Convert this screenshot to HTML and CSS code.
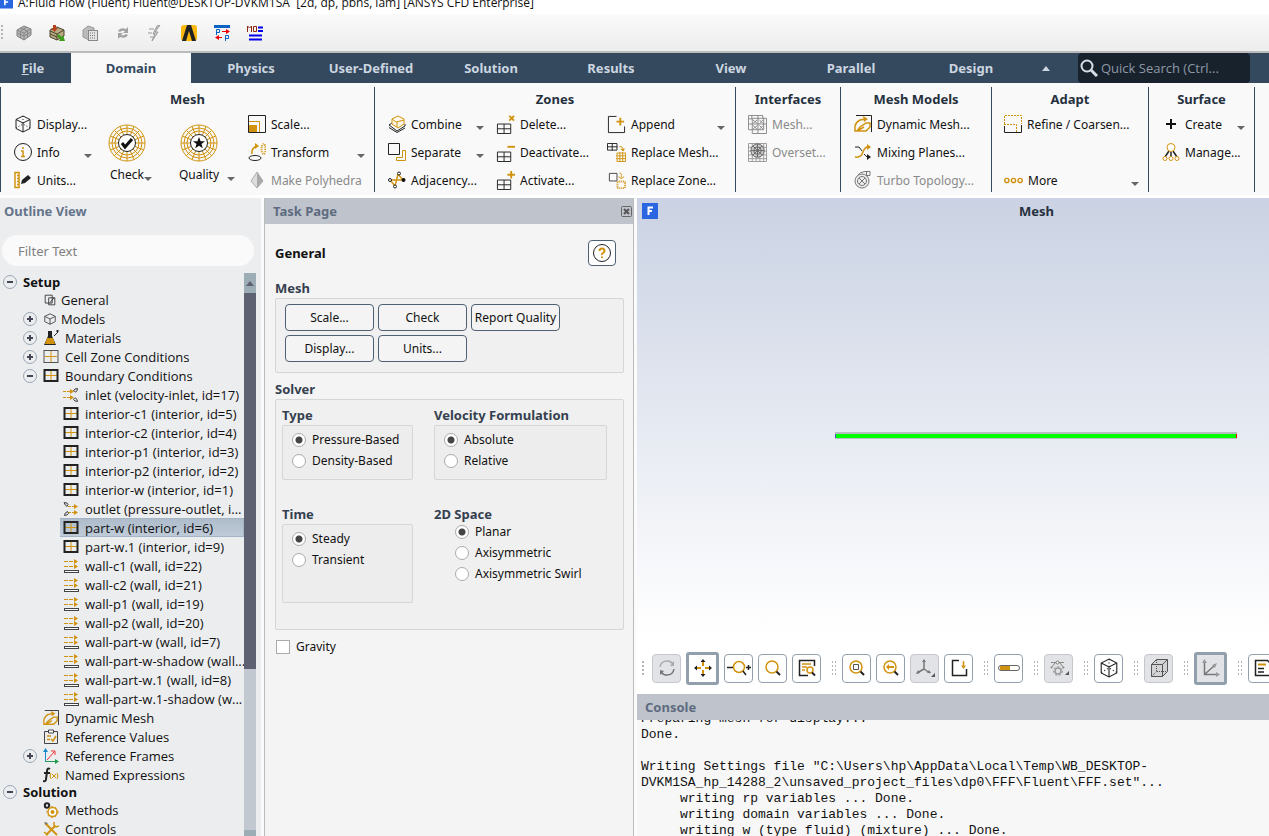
FILE: index.html
```html
<!DOCTYPE html>
<html lang="en">
<head>
    <meta charset="UTF-8">
    <meta name="viewport" content="width=device-width, initial-scale=1.0">
    <title>A:Fluid Flow (Fluent)</title>
    <link rel="stylesheet" href="styles.css">
</head>
<body>
    <!-- shared icons -->
    <svg class="sprite" aria-hidden="true">
        <symbol id="cube" viewBox="0 0 18 18">
            <path d="M9 1l7 3.500v9L9 17l-7-3.500v-9zM2 4.500l7 3.500 7-3.500M9 8v9" fill="none" stroke="#222"/>
            <path d="M9 1v8M2 13l7-4 7 4" fill="none" stroke="#222" stroke-dasharray="1 2"/>
        </symbol>
        <symbol id="grid-dark" viewBox="0 0 16 16">
            <path d="M8 2v12M2 7.500h12" stroke="#d1930f"/>
            <rect x="1.500" y="2" width="13" height="11" fill="none" stroke="#222" stroke-width="2"/>
        </symbol>
        <symbol id="grid-light" viewBox="0 0 16 16">
            <path d="M8 2v12M2 7.500h12" stroke="#d1930f"/>
            <rect x="1" y="1.500" width="14" height="12" fill="none" stroke="#555"/>
        </symbol>
        <symbol id="wall" viewBox="0 0 16 16">
            <path d="M1 3.500h12M1 8.500h12" stroke="#d1930f" stroke-dasharray="4 1"/>
            <path d="M11 1l4 2.500-4 2.500zM11 6l4 2.500-4 2.500z" fill="#d1930f"/>
            <rect x="1.500" y="12.500" width="14" height="2" fill="#fff" stroke="#444"/>
        </symbol>
        <symbol id="inlet" viewBox="0 0 16 16">
            <path d="M0 4.500h8M0 10.500h8" stroke="#d1930f" stroke-dasharray="3 1"/>
            <path d="M7 2l4 2.500L7 7zM7 8l4 2.500L7 13z" fill="#d1930f"/>
            <path d="M10.500 3.500q1-2 4-2 0 3-2 3.500zM10.500 12.500q1-2 2-1.500 2 1 2 3.500-3 0-4-2z" fill="#ddd" stroke="#444"/>
        </symbol>
        <symbol id="outlet" viewBox="0 0 16 16">
            <path d="M5 5.500h8M5 11.500h8" stroke="#d1930f" stroke-dasharray="3 1"/>
            <path d="M11 3l4 2.500-4 2.500zM11 9l4 2.500-4 2.500z" fill="#d1930f"/>
            <path d="M1 1.500q4 0 4 2l-1 2q-2-1-3-4zM1.500 14.500q0-3 3-4l1 2q-1 2-4 2z" fill="#ddd" stroke="#444"/>
        </symbol>
        <symbol id="dynamic" viewBox="0 0 18 18">
            <path d="M2 .500h15.500V17" fill="none" stroke="#222"/>
            <path d="M1 11q1-4 5-6l6-1M1 11l0 5h3M3 16l3-4 6-4 4 0v4l-4 4H3l7-4" fill="none" stroke="#d1930f" stroke-width="1.500"/>
            <path d="M9 1l5 3-4 3z" fill="#d1930f"/>
        </symbol>
        <symbol id="minigrid" viewBox="0 0 20 20">
            <path d="M1.500 9.500h14v10h-14zM8.500 9.500v10M1.500 14.500h14" fill="none" stroke="#222"/>
        </symbol>
        <symbol id="radial" viewBox="0 0 38 38">
            <g fill="none" stroke="#d1930f">
                <circle cx="19" cy="19" r="18"/><circle cx="19" cy="19" r="15"/><circle cx="19" cy="19" r="12"/>
                <path d="M19 1v36M1 19h36M6.300 6.300l25.400 25.400M31.700 6.300L6.300 31.700M12 2.400l14 33.200M26 2.400L12 35.600M2.400 12l33.200 14M2.400 26l33.200-14"/>
            </g>
            <circle cx="19" cy="19" r="8.500" fill="#fff" stroke="#222"/>
        </symbol>
        <symbol id="magnifier" viewBox="0 0 20 20">
            <circle cx="9" cy="9" r="6" fill="#fffdf5" stroke="#d1930f" stroke-width="1.500"/>
            <path d="M13.500 13.500l3.500 3.500" stroke="#222" stroke-width="2"/>
        </symbol>
    </svg>

    <header class="titlebar">
        <svg class="logo" viewBox="0 0 16 16"><rect width="16" height="16" fill="#2a66e0"/><path d="M6 12V4h5M6 8h4" fill="none" stroke="#fff" stroke-width="2"/></svg>
        <span class="title-text">A:Fluid Flow (Fluent) Fluent@DESKTOP-DVKM1SA&nbsp; [2d, dp, pbns, lam] [ANSYS CFD Enterprise]</span>
    </header>

    <div class="toolbar">
        <span class="grip"></span>
        <button class="tool" aria-label="Mesh"><svg viewBox="0 0 16 16"><path d="M1 5l7-4 7 3v6l-7 5-7-4z" fill="#b4b4b4" stroke="#808080"/><path d="M1 5l7 3 7-4M8 8v7M1 8l7 3 7-4M4.500 3l7 3v7M11 2L4.500 6v7" fill="none" stroke="#888"/></svg></button>
        <button class="tool" aria-label="Update mesh"><svg viewBox="0 0 16 16"><path d="M1 5l7-3 7 3v6l-7 4-7-3z" fill="#b5aa83" stroke="#4d452b"/><path d="M1 6l7 3 7-4M8 9v6M1 9l7 3" fill="none" stroke="#4d452b"/><path d="M4 0h3v3h2L5.500 7 2 3h2z" fill="#b5431c"/><path d="M9 9l4 3 1-2 2 6h-6l1-2-3-3z" fill="#3f9c1c"/></svg></button>
        <button class="tool" aria-label="Calculate"><svg viewBox="0 0 16 16"><path d="M1 5l5-4 6 2v11L7 15l-6-3z" fill="#bbb" stroke="#999"/><rect x="6.500" y="5.500" width="9" height="10" fill="#e4e4e4" stroke="#888"/><path d="M8 8h6M8 10.500h6M8 13h6" stroke="#777" stroke-dasharray="1 1"/></svg></button>
        <button class="tool" aria-label="Refresh"><svg viewBox="0 0 16 16"><path d="M3 6q2-4 8-2l2-2v6H8l2-2q-3-1-5 1zM13 10q-2 4-8 2l-2 2V8h5l-2 2q3 1 5-1z" fill="#a3a3a3"/></svg></button>
        <button class="tool" aria-label="Run"><svg viewBox="0 0 16 16"><path d="M12 0L7 7h3l-6 9 3-7H5l4-8z" fill="#ccc" stroke="#999"/><path d="M1 4h5M0 8h4M2 12h3" stroke="#999"/></svg></button>
        <button class="tool" aria-label="Ansys"><svg viewBox="0 0 16 16"><rect width="16" height="16" rx="3" fill="#fbb80f"/><path d="M6 0h4l5 16h-4L8 6l-3 10H1z" fill="#222"/></svg></button>
        <button class="tool" aria-label="Parameters"><svg viewBox="0 0 16 16"><path d="M0 1.500h16" stroke="#0a62c4" stroke-width="3"/><path d="M2.500 10V4.500h3v3h-3M11.500 16v-5.500h3v3h-3" fill="none" stroke="#0a62c4"/><path d="M8 6.500h5M3 12.500h5" stroke="#e00"/><path d="M12 4l4 2.500-4 2.500zM5 10l-4 2.500L5 15z" fill="#e00"/></svg></button>
        <button class="tool" aria-label="Monitor"><svg viewBox="0 0 16 16"><path d="M.500 7V1l2 2 2-2v6M6.500 1.500h3v5h-3z" fill="none" stroke="#8d2a12"/><path d="M11 2.500h5M11 6h5M2 10.500h13M2 14.500h13" stroke="#00e" stroke-width="2"/></svg></button>
    </div>

    <nav class="tabs">
        <button class="tab tab-file"><u>F</u>ile</button>
        <button class="tab active">Domain</button>
        <button class="tab">Physics</button>
        <button class="tab">User-Defined</button>
        <button class="tab">Solution</button>
        <button class="tab">Results</button>
        <button class="tab">View</button>
        <button class="tab">Parallel</button>
        <button class="tab">Design</button>
        <button class="collapse" aria-label="Collapse ribbon"><span class="caret-up"></span></button>
        <label class="search">
            <svg viewBox="0 0 18 18"><circle cx="7" cy="7" r="5.500" fill="none" stroke="#d7dde5" stroke-width="2"/><path d="M11 11l6 6" stroke="#d7dde5" stroke-width="3"/></svg>
            <input type="text" placeholder="Quick Search (Ctrl..." aria-label="Quick Search">
        </label>
    </nav>

    <section class="ribbon">
        <div class="group">
            <h2>Mesh</h2>
            <div class="group-body mesh-body">
                <div class="col">
                    <button class="cmd"><svg><use href="#cube"/></svg>Display...</button>
                    <button class="cmd"><svg viewBox="0 0 18 18"><circle cx="9" cy="9" r="8.500" fill="none" stroke="#222"/><path d="M9 4v2M7 8h2v5M7 13.500h4" fill="none" stroke="#d1930f" stroke-width="1.500"/></svg>Info<span class="caret"></span></button>
                    <button class="cmd"><svg viewBox="0 0 18 18"><path d="M1 1.500h4v15H1zM3 4.500h2M3 7.500h2M3 10.500h2M3 13.500h2" fill="none" stroke="#d1930f" stroke-width="1.500"/><path d="M7 13l1-4 6-5 3 3-6 5z" fill="#222"/></svg>Units...</button>
                </div>
                <button class="big"><svg viewBox="0 0 38 38"><use href="#radial"/><path d="M14 19l3 4 7-8" fill="none" stroke="#111" stroke-width="3"/></svg><span class="big-label">Check<span class="caret"></span></span></button>
                <button class="big"><svg viewBox="0 0 38 38"><use href="#radial"/><path d="M19 13l1.600 4.200H25l-3.500 2.700 1.300 4.300-3.800-2.500-3.800 2.500 1.300-4.300-3.500-2.700h4.400z" fill="#111"/></svg><span class="big-label spaced">Quality<span class="caret"></span></span></button>
                <div class="col">
                    <button class="cmd"><svg viewBox="0 0 18 18"><path d="M.500.500h17v17H.500z" fill="none" stroke="#222"/><path d="M1 6.500h10.500V17" fill="none" stroke="#d1930f"/><path d="M1 10h8v7H1z" fill="#d1930f"/></svg>Scale...</button>
                    <button class="cmd"><svg viewBox="0 0 18 18"><ellipse cx="7" cy="15" rx="6" ry="2.500" fill="none" stroke="#222"/><path d="M4 11q-1-6 5-8" fill="none" stroke="#d1930f" stroke-width="1.500"/><path d="M7 0l4 3-4 3z" fill="#d1930f"/><ellipse cx="15.500" cy="6" rx="2" ry="5" fill="none" stroke="#d1930f" stroke-width="2" stroke-dasharray="1 1"/></svg>Transform<span class="caret"></span></button>
                    <button class="cmd" disabled><svg viewBox="0 0 18 18"><path d="M9 1l6 9-6 7-6-7z" fill="#ddd" stroke="#aaa"/><path d="M9 1v16l6-7z" fill="#aaa"/></svg>Make Polyhedra</button>
                </div>
            </div>
        </div>
        <div class="group">
            <h2>Zones</h2>
            <div class="group-body zones-body">
                <div class="col">
                    <button class="cmd"><svg viewBox="0 0 18 18"><path d="M1 10l8 6 8-5M1 12.500l8 5 8-4.500M1 10l3-2M17 11V9" fill="none" stroke="#222"/><path d="M4 4l6-3 6 3v5l-6 4-6-4zM4 4l4 3 8-2M9 7v5" fill="#fff8e8" stroke="#d1930f"/></svg>Combine<span class="caret"></span></button>
                    <button class="cmd"><svg viewBox="0 0 18 18"><path d="M.500.500h11v11H.500z" fill="none" stroke="#222"/><path d="M14.500 7.500h3v10h-9v-3h6z" fill="none" stroke="#d1930f"/></svg>Separate<span class="caret"></span></button>
                    <button class="cmd"><svg viewBox="0 0 18 18"><path d="M2 9h13L10 3 7 15z" fill="none" stroke="#d1930f" stroke-width="1.500"/><g fill="#fff" stroke="#222"><circle cx="2" cy="9" r="1.500"/><circle cx="11" cy="2.500" r="1.500"/><circle cx="7" cy="15.500" r="1.500"/></g><circle cx="15.500" cy="9" r="2" fill="#111"/></svg>Adjacency...</button>
                </div>
                <div class="col">
                    <button class="cmd"><svg class="wide" viewBox="0 0 20 20"><use href="#minigrid"/><path d="M14 1l5 5M19 1l-5 5" stroke="#d1930f" stroke-width="2"/></svg>Delete...</button>
                    <button class="cmd"><svg class="wide" viewBox="0 0 20 20"><use href="#minigrid"/><path d="M12 4h8" stroke="#d1930f" stroke-width="2"/></svg>Deactivate...</button>
                    <button class="cmd"><svg class="wide" viewBox="0 0 20 20"><use href="#minigrid"/><path d="M12 4h8M16 0v8" stroke="#d1930f" stroke-width="2"/></svg>Activate...</button>
                </div>
                <div class="col">
                    <button class="cmd"><svg class="wide" viewBox="0 0 20 20"><path d="M10 1.500H1.500v17h17V12" fill="none" stroke="#222"/><path d="M10 7h8M14 3v8" stroke="#d1930f" stroke-width="2"/></svg>Append<span class="caret"></span></button>
                    <button class="cmd"><svg class="wide" viewBox="0 0 20 20"><path d="M.500.500h10v7H.500zM5.500 0v8M0 4h11" fill="none" stroke="#222"/><path d="M13 4q4-1 4 4M10.500 10.500h9v9h-9zM13.500 10v10M16.500 10v10M10 13.500h10M10 16.500h10" fill="none" stroke="#d1930f"/><path d="M14 6h5l-2 3z" fill="#d1930f"/></svg>Replace Mesh...</button>
                    <button class="cmd"><svg class="wide" viewBox="0 0 20 20"><path d="M2.500 2.500h8v8h-8z" fill="none" stroke="#444"/><path d="M13 2q3 0 2 5M12 6l3 2 3-2" fill="none" stroke="#d1930f"/><path d="M11 11h8v7h-8z" fill="none" stroke="#d1930f" stroke-width="2" stroke-dasharray="1 1"/></svg>Replace Zone...</button>
                </div>
            </div>
        </div>
        <div class="group">
            <h2>Interfaces</h2>
            <div class="group-body interfaces-body">
                <div class="col">
                    <button class="cmd" disabled><svg class="wide" viewBox="0 0 20 20"><path d="M.500.500h15v3h4v16h-15v-4h-4zM4.500 3.500h12v12h-12zM10.500 0v20M0 9.500h20M4 .500v4M0 4h4M5 5l5 4M10 5l-5 4M12 5l4 4M16 5l-4 4M5 11l5 4M10 11l-5 4M12 11l4 4M16 11l-4 4" fill="none" stroke="#888"/></svg>Mesh...</button>
                    <button class="cmd" disabled><svg class="wide" viewBox="0 0 20 20"><path d="M.500.500h19v19H.500zM4.500 0v20M8.500 0v20M12.500 0v20M16.500 0v20M0 4.500h20M0 8.500h20M0 12.500h20M0 16.500h20" fill="none" stroke="#999"/><circle cx="10" cy="8" r="7" fill="#ccc" stroke="#666"/><circle cx="10" cy="8" r="4" fill="none" stroke="#666"/><path d="M3 8h14M10 1v14M5 3l10 10M15 3L5 13" stroke="#666"/></svg>Overset...</button>
                </div>
            </div>
        </div>
        <div class="group">
            <h2>Mesh Models</h2>
            <div class="group-body models-body">
                <div class="col">
                    <button class="cmd"><svg><use href="#dynamic"/></svg>Dynamic Mesh...</button>
                    <button class="cmd"><svg viewBox="0 0 18 18"><path d="M1 4h4l3 4M10 11l3 3h3" fill="none" stroke="#222"/><path d="M1 14q6 1 8-5t7-5" fill="none" stroke="#d1930f" stroke-width="1.500"/><path d="M13 1l4 3-4 3z" fill="#d1930f"/><path d="M13 11l4 3-4 3z" fill="#222"/></svg>Mixing Planes...</button>
                    <button class="cmd" disabled><svg viewBox="0 0 18 18"><circle cx="8" cy="10" r="7" fill="#eee" stroke="#777"/><circle cx="8" cy="10" r="4.500" fill="none" stroke="#777"/><path d="M5 7l6 6M11 7l-6 6M4 4q2-3 7-3.500h5v4h-4M12.500 1v3" fill="none" stroke="#777"/></svg>Turbo Topology...</button>
                </div>
            </div>
        </div>
        <div class="group">
            <h2>Adapt</h2>
            <div class="group-body adapt-body">
                <div class="col">
                    <button class="cmd"><svg viewBox="0 0 18 18"><path d="M.500 9V.500h17V9M0 9.500h12.500V17" fill="none" stroke="#d1930f" stroke-dasharray="2 1"/><path d="M.500 11v6.500h17V10" fill="none" stroke="#222"/></svg>Refine / Coarsen...</button>
                    <span class="cmd"></span>
                    <button class="cmd"><svg class="wide" viewBox="0 0 20 20"><g fill="none" stroke="#d1930f" stroke-width="1.500"><circle cx="3" cy="10" r="2.200"/><circle cx="10" cy="10" r="2.200"/><circle cx="17" cy="10" r="2.200"/></g></svg>More<span class="caret"></span></button>
                </div>
            </div>
        </div>
        <div class="group">
            <h2>Surface</h2>
            <div class="group-body surface-body">
                <div class="col">
                    <button class="cmd"><svg viewBox="0 0 18 18"><path d="M4 9h10M9 4v10" stroke="#111" stroke-width="2"/></svg>Create<span class="caret"></span></button>
                    <button class="cmd"><svg viewBox="0 0 18 18"><path d="M7 8l-4 6M11 8l4 6M9 9v5" stroke="#222" stroke-width="1.500"/><g fill="#fff" stroke="#d1930f"><circle cx="9" cy="4.500" r="4"/><circle cx="3" cy="15.500" r="2"/><circle cx="9" cy="15.500" r="2"/><circle cx="15" cy="15.500" r="2"/></g></svg>Manage...</button>
                </div>
            </div>
        </div>
    </section>

    <main class="workspace">
        <aside class="outline">
            <h2 class="outline-title">Outline View</h2>
            <input class="filter" type="text" placeholder="Filter Text" aria-label="Filter Text">
            <div class="tree-wrap">
                <ul class="tree">
                    <li class="section"><button class="expander minus" aria-label="Collapse"></button>Setup</li>
                    <li class="level1"><svg class="small" viewBox="0 0 16 16"><path d="M2.500 2.500h8v9h-8zM6.500 5.500h7v8h-7zM8 11l5-6" fill="none" stroke="#333"/></svg>General</li>
                    <li class="level1"><button class="expander" aria-label="Expand"></button><svg class="small" viewBox="0 0 16 16"><path d="M8 2l6 3v6l-6 3-6-3V5zM2 5l6 3 6-3M8 8v6" fill="none" stroke="#444"/></svg>Models</li>
                    <li class="level1"><button class="expander" aria-label="Expand"></button><svg viewBox="0 0 16 16"><path d="M5 1h4v5l4 9H1l4-9z" fill="#222"/><path d="M4 8h6l2 6H2z" fill="#d1930f"/><path d="M11 6l4-4M13 1h3M14.500 0v3" stroke="#222"/></svg>Materials</li>
                    <li class="level1"><button class="expander" aria-label="Expand"></button><svg><use href="#grid-light"/></svg>Cell Zone Conditions</li>
                    <li class="level1"><button class="expander minus" aria-label="Collapse"></button><svg><use href="#grid-dark"/></svg>Boundary Conditions</li>
                    <li class="level2"><svg><use href="#inlet"/></svg><span>inlet (velocity-inlet, id=17)</span></li>
                    <li class="level2"><svg><use href="#grid-dark"/></svg><span>interior-c1 (interior, id=5)</span></li>
                    <li class="level2"><svg><use href="#grid-dark"/></svg><span>interior-c2 (interior, id=4)</span></li>
                    <li class="level2"><svg><use href="#grid-dark"/></svg><span>interior-p1 (interior, id=3)</span></li>
                    <li class="level2"><svg><use href="#grid-dark"/></svg><span>interior-p2 (interior, id=2)</span></li>
                    <li class="level2"><svg><use href="#grid-dark"/></svg><span>interior-w (interior, id=1)</span></li>
                    <li class="level2"><svg><use href="#outlet"/></svg><span>outlet (pressure-outlet, i...</span></li>
                    <li class="level2 selected"><svg><use href="#grid-dark"/></svg><span>part-w (interior, id=6)</span></li>
                    <li class="level2"><svg><use href="#grid-dark"/></svg><span>part-w.1 (interior, id=9)</span></li>
                    <li class="level2"><svg><use href="#wall"/></svg><span>wall-c1 (wall, id=22)</span></li>
                    <li class="level2"><svg><use href="#wall"/></svg><span>wall-c2 (wall, id=21)</span></li>
                    <li class="level2"><svg><use href="#wall"/></svg><span>wall-p1 (wall, id=19)</span></li>
                    <li class="level2"><svg><use href="#wall"/></svg><span>wall-p2 (wall, id=20)</span></li>
                    <li class="level2"><svg><use href="#wall"/></svg><span>wall-part-w (wall, id=7)</span></li>
                    <li class="level2"><svg><use href="#wall"/></svg><span>wall-part-w-shadow (wall...</span></li>
                    <li class="level2"><svg><use href="#wall"/></svg><span>wall-part-w.1 (wall, id=8)</span></li>
                    <li class="level2"><svg><use href="#wall"/></svg><span>wall-part-w.1-shadow (w...</span></li>
                    <li class="level1"><svg><use href="#dynamic"/></svg>Dynamic Mesh</li>
                    <li class="level1"><svg viewBox="0 0 16 16"><path d="M1.500 2.500h13v12h-13z" fill="none" stroke="#444"/><path d="M5.500 1h5v3h-5z" fill="#fff" stroke="#444"/><path d="M4 7h4M4 10.500h3M8 10l2 2 3-5" fill="none" stroke="#d1930f" stroke-width="1.500"/></svg>Reference Values</li>
                    <li class="level1"><button class="expander" aria-label="Expand"></button><svg viewBox="0 0 16 16"><path d="M2.500 14V3" stroke="#1a8ad0"/><path d="M0 4l2.500-4L5 4z" fill="#1a8ad0"/><path d="M2 13.500h11" stroke="#1f9a50"/><path d="M12 11l4 2.500-4 2.500z" fill="#1f9a50"/><path d="M4 12l7-8M8 3h4v4" fill="none" stroke="#e33"/></svg>Reference Frames</li>
                    <li class="level1"><svg viewBox="0 0 16 16"><path d="M7 2Q4 0 4 5l-1 7q0 3-3 2M1 6h6" fill="none" stroke="#222" stroke-width="2"/><path d="M8 6q-2 3 0 6M14 6q2 3 0 6M9 7l4 4M13 7l-4 4" fill="none" stroke="#d1930f"/></svg>Named Expressions</li>
                    <li class="section"><button class="expander minus" aria-label="Collapse"></button>Solution</li>
                    <li class="level1"><svg viewBox="0 0 16 16"><circle cx="4" cy="3.500" r="2.200" fill="none" stroke="#222" stroke-width="2"/><circle cx="9.500" cy="10" r="4.500" fill="#fff" stroke="#d1930f" stroke-width="1.500"/><circle cx="9.500" cy="10" r="5.500" fill="none" stroke="#d1930f" stroke-dasharray="2 2"/><circle cx="9.500" cy="10" r="2" fill="#d1930f"/></svg>Methods</li>
                    <li class="level1"><svg viewBox="0 0 16 16"><path d="M2 2l12 12M3 14l9-9" stroke="#d1930f" stroke-width="2"/><path d="M11 1v3l2 2 3-1M1 11l4 3" fill="none" stroke="#d1930f" stroke-width="1.500"/><path d="M1 1l4 1-2 2z" fill="#777"/></svg>Controls</li>
                </ul>
                <div class="scrollbar">
                    <span class="scroll-end"><span class="caret-up dark"></span></span>
                    <span class="scroll-thumb"></span>
                    <span class="scroll-track"></span>
                    <span class="scroll-end"></span>
                </div>
            </div>
        </aside>

        <section class="task">
            <div class="panel-head">
                <h2>Task Page</h2>
                <button class="close" aria-label="Close"><svg viewBox="0 0 11 11"><rect x=".500" y=".500" width="10" height="10" rx="1" fill="none" stroke="#666"/><path d="M3 3l5 5M8 3L3 8" stroke="#555" stroke-width="2"/></svg></button>
            </div>
            <div class="task-body">
                <div class="task-title">
                    <h3>General</h3>
                    <button class="help" aria-label="Help"><svg viewBox="0 0 20 20"><circle cx="10" cy="10" r="8.500" fill="none" stroke="#222"/><path d="M7.500 8q0-2.500 2.500-2.500T12.500 8q0 1-1.500 2t-1 2M10 13.500V15" fill="none" stroke="#d1930f" stroke-width="2"/></svg></button>
                </div>
                <h4>Mesh</h4>
                <div class="box mesh-buttons">
                    <button class="push">Scale...</button>
                    <button class="push">Check</button>
                    <button class="push">Report Quality</button>
                    <button class="push">Display...</button>
                    <button class="push">Units...</button>
                </div>
                <h4 class="solver-title">Solver</h4>
                <div class="box solver">
                    <div class="field" role="radiogroup" aria-label="Type">
                        <h4>Type</h4>
                        <div class="box options">
                            <label><input type="radio" name="type" checked>Pressure-Based</label>
                            <label><input type="radio" name="type">Density-Based</label>
                        </div>
                    </div>
                    <div class="field" role="radiogroup" aria-label="Velocity Formulation">
                        <h4>Velocity Formulation</h4>
                        <div class="box options">
                            <label><input type="radio" name="velocity" checked>Absolute</label>
                            <label><input type="radio" name="velocity">Relative</label>
                        </div>
                    </div>
                    <div class="field" role="radiogroup" aria-label="Time">
                        <h4>Time</h4>
                        <div class="box options tall">
                            <label><input type="radio" name="time" checked>Steady</label>
                            <label><input type="radio" name="time">Transient</label>
                        </div>
                    </div>
                    <div class="field" role="radiogroup" aria-label="2D Space">
                        <h4>2D Space</h4>
                        <div class="options bare">
                            <label><input type="radio" name="space" checked>Planar</label>
                            <label><input type="radio" name="space">Axisymmetric</label>
                            <label><input type="radio" name="space">Axisymmetric Swirl</label>
                        </div>
                    </div>
                </div>
                <label class="gravity"><input type="checkbox">Gravity</label>
            </div>
        </section>

        <section class="right">
            <div class="graphics">
                <div class="view-head">
                    <svg viewBox="0 0 16 16"><rect width="16" height="16" fill="#2a66e0"/><path d="M6.500 12V4.500H11M6.500 8H10" fill="none" stroke="#fff" stroke-width="2"/></svg>
                    <h2>Mesh</h2>
                </div>
                <div class="pipe"></div>
                <div class="view-tools">
                    <span class="grip"></span>
                    <button class="vt off" aria-label="Rotate"><svg viewBox="0 0 20 20"><path d="M3 9q1-6 7-6 4 0 6 3" fill="none" stroke="#aaa" stroke-width="1.500"/><path d="M17 11q-1 6-7 6-4 0-6-3" fill="none" stroke="#777" stroke-width="1.500"/><path d="M17 3v5h-4z" fill="#aaa"/><path d="M3 17v-5l4 1z" fill="#777"/></svg></button>
                    <button class="vt on" aria-label="Pan"><svg viewBox="0 0 20 20"><path d="M10 4v4M10 12v4M4 10h4M12 10h4" stroke="#d1930f" stroke-width="2"/><path d="M7.500 4L10 1l2.500 3zM7.500 16l2.500 3 2.500-3zM4 7.500L1 10l3 2.500zM16 7.500l3 2.500-3 2.500z" fill="#222"/></svg></button>
                    <button class="vt" aria-label="Zoom in or out"><svg class="zoom" viewBox="0 0 24 20"><circle cx="12" cy="9" r="5.500" fill="#fffdf5" stroke="#d1930f" stroke-width="1.500"/><path d="M0 9.500h6M19 9.500h5M21.500 7v5M16 13l3 4" stroke="#222" stroke-width="1.500"/></svg></button>
                    <button class="vt" aria-label="Zoom"><svg><use href="#magnifier"/></svg></button>
                    <button class="vt" aria-label="Probe"><svg viewBox="0 0 20 20"><path d="M11 17.500H2.500v-15h15V8" fill="none" stroke="#222" stroke-width="1.500"/><path d="M5 6h9M5 9h5M5 12h3" stroke="#d1930f" stroke-width="1.500"/><circle cx="13" cy="12" r="3" fill="#fff" stroke="#d1930f" stroke-width="1.500"/><path d="M15 14.500l3 3" stroke="#222" stroke-width="2"/></svg></button>
                    <span class="grip"></span>
                    <button class="vt" aria-label="Fit"><svg viewBox="0 0 20 20"><use href="#magnifier"/><path d="M6.500 6.500h5v5h-5z" fill="#fff" stroke="#555"/></svg></button>
                    <button class="vt" aria-label="Previous view"><svg viewBox="0 0 20 20"><use href="#magnifier"/><path d="M7 9h6" stroke="#d1930f" stroke-width="2"/><path d="M8 6L5 9l3 3z" fill="#d1930f"/></svg></button>
                    <button class="vt off" aria-label="Orientation"><svg viewBox="0 0 20 20"><path d="M9 2v9l-7 4M9 11l6 4" fill="none" stroke="#777" stroke-width="1.500"/><path d="M7 4l2-3 2 3zM1 16l2-4 2 3zM12 15h4l-2-3z" fill="#777"/><path d="M20 15v4h-4z" fill="#555"/></svg></button>
                    <button class="vt" aria-label="Save view"><svg viewBox="0 0 20 20"><path d="M10 2.500H3.500v15h14V11" fill="none" stroke="#222" stroke-width="1.500"/><path d="M14.500 3v6" stroke="#d1930f" stroke-width="1.500"/><path d="M12 7.500h5L14.500 11z" fill="#d1930f"/></svg></button>
                    <span class="grip"></span>
                    <button class="vt" aria-label="Progress"><svg class="zoom" viewBox="0 0 24 20"><rect x="1.500" y="7.500" width="21" height="5" rx="2.500" fill="#fff" stroke="#666"/><path d="M3 8h10v4H3z" fill="#d1930f"/></svg></button>
                    <span class="grip"></span>
                    <button class="vt off" aria-label="Options"><svg viewBox="0 0 20 20"><path d="M2 4.500h13M3 9l3-4M14 9l-3-4" fill="none" stroke="#888"/><circle cx="8.500" cy="4.500" r="1.500" fill="#fff" stroke="#777"/><circle cx="9" cy="13" r="3" fill="none" stroke="#999" stroke-width="1.500"/><circle cx="9" cy="13" r="4.500" fill="none" stroke="#999" stroke-dasharray="2 2"/><circle cx="2.500" cy="9.500" r="1" fill="#888"/><circle cx="14.500" cy="9.500" r="1" fill="#888"/><path d="M20 13v4h-4z" fill="#555"/></svg></button>
                    <span class="grip"></span>
                    <button class="vt" aria-label="Isometric"><svg><use href="#cube"/></svg></button>
                    <span class="grip"></span>
                    <button class="vt off" aria-label="Perspective"><svg viewBox="0 0 20 20"><path d="M2.500 6.500l5-5h11v12l-5 5h-11z" fill="#d3d3d6" stroke="#555"/><path d="M2.500 6.500h11v12M13.500 6.500l5-5" fill="none" stroke="#555"/><path d="M7.500 2v11.500H18M7.500 13.500l-5 5" fill="none" stroke="#555" stroke-dasharray="1 1"/></svg></button>
                    <span class="grip"></span>
                    <button class="vt on off" aria-label="Axes"><svg viewBox="0 0 20 20"><path d="M3.500 4v12.500H17M4 16L13 8" fill="none" stroke="#777" stroke-width="1.500"/><path d="M1 5l2.500-4L6 5zM15 14l4 2.500-4 2.500zM11 7l5-2-2 5z" fill="#999"/></svg></button>
                    <span class="grip"></span>
                    <button class="vt" aria-label="Report"><svg viewBox="0 0 20 20"><path d="M2.500 2.500h12l4 4v11h-16z" fill="none" stroke="#222" stroke-width="1.500"/><path d="M5 6.500h8" stroke="#d1930f" stroke-width="2"/><path d="M5 10.500h6M5 14h6" stroke="#222" stroke-width="1.500"/></svg></button>
                </div>
            </div>
            <div class="panel-head"><h2>Console</h2></div>
            <div class="console">
<pre>Preparing mesh for display...
Done.

Writing Settings file "C:\Users\hp\AppData\Local\Temp\WB_DESKTOP-
DVKM1SA_hp_14288_2\unsaved_project_files\dp0\FFF\Fluent\FFF.set"...
     writing rp variables ... Done.
     writing domain variables ... Done.
     writing w (type fluid) (mixture) ... Done.</pre>
            </div>
        </section>
    </main>
</body>
</html>
```
FILE: styles.css
```css
* {
    box-sizing: border-box;
}

body {
    display: flex;
    flex-direction: column;
    height: 100vh;
    margin: 0;
    overflow: hidden;
    background: #fbfbfb;
    font-family: "Noto Sans", "Open Sans", sans-serif;
    font-size: 12px;
    color: #111;
}

h2, h3, h4, ul, pre {
    margin: 0;
    padding: 0;
    font-size: 13px;
}

button, input {
    font: inherit;
    color: inherit;
}

button {
    padding: 0;
    border: none;
    background: none;
}

.sprite {
    position: absolute;
    width: 0;
    height: 0;
}

/* title bar and quick toolbar */
.titlebar {
    display: flex;
    align-items: flex-end;
    height: 14px;
    flex: none;
    overflow: hidden;
    background: #fff;
}

.logo {
    width: 13px;
    height: 16px;
    margin: 0 5px 4px 0;
}

.title-text {
    font-family: "Open Sans", sans-serif;
    line-height: 22px;
    white-space: nowrap;
}

.toolbar {
    display: flex;
    align-items: center;
    height: 39px;
    flex: none;
    border-bottom: 2px solid #bbb;
    background: linear-gradient(#fafafa, #ededed);
}

.tool {
    width: 33px;
    height: 24px;
}

.tool svg {
    display: block;
    width: 16px;
    height: 16px;
    margin: auto;
}

.grip {
    width: 11px;
    height: 17px;
    padding: 0 1px 0 6px;
    background: radial-gradient(circle, #b5b5b5 1px, transparent 1px) 0 0 / 4px 4px;
    background-clip: content-box;
}

.toolbar .grip {
    width: 7px;
    padding: 0 3px 0 0;
}

/* ribbon tabs */
.tabs {
    display: flex;
    height: 30px;
    flex: none;
    background: #34495e;
}

.tab {
    width: 120px;
    font-size: 13px;
    font-weight: bold;
    color: #ccd6e0;
}

.tab-file {
    width: 71px;
    padding-right: 5px;
}

.tab.active {
    background: #f9f9f9;
    color: #34495e;
}

.collapse {
    display: flex;
    justify-content: center;
    align-items: center;
    width: 30px;
    margin-right: 17px;
}

.caret-up {
    border: 4px solid transparent;
    border-top: none;
    border-bottom: 5px solid #ccd6e0;
}

.caret-up.dark {
    border-bottom-color: #5d6172;
}

.search {
    display: flex;
    align-items: center;
    gap: 3px;
    width: 172px;
    padding: 0 2px;
    border-radius: 4px;
    background: #18222d;
}

.search svg {
    width: 18px;
    height: 18px;
    flex: none;
}

.search input {
    flex: 1;
    min-width: 0;
    padding: 0;
    border: none;
    outline: none;
    background: none;
    font-family: "Open Sans", sans-serif;
    font-size: 13px;
    color: #fff;
}

.search input::placeholder {
    color: #8d99a6;
}

/* ribbon */
.ribbon {
    display: grid;
    grid-template-columns: 375fr 361fr 105fr 151fr 157fr 106fr 14fr;
    flex: none;
    padding: 4px 0 3px;
    border-bottom: 3px solid #fff;
    background: #f9f9f9;
}

.group {
    min-width: 0;
    border-right: 1px solid #34495e;
}

.group:first-child {
    border-left: 1px solid #34495e;
}

.group h2 {
    padding-bottom: 1px;
    line-height: 24px;
    text-align: center;
    color: #26313e;
}

.group-body {
    display: grid;
    white-space: nowrap;
}

.mesh-body {
    grid-template-columns: 78px 70px 74px 129px;
    padding-left: 13px;
}

.mesh-body .col:last-child {
    margin-left: 12px;
}

.zones-body {
    grid-template-columns: 96px 99px 118px;
    column-gap: 12px;
    padding-left: 13px;
}

.interfaces-body {
    padding-left: 12px;
}

.models-body {
    padding-left: 13px;
}

.adapt-body {
    padding: 0 9px 0 12px;
}

.surface-body {
    padding: 0 9px 0 13px;
}

.col {
    display: flex;
    flex-direction: column;
    gap: 4px;
}

.cmd {
    display: flex;
    align-items: center;
    gap: 5px;
    height: 24px;
}

.cmd svg {
    width: 18px;
    height: 18px;
    flex: none;
}

.cmd svg.wide {
    width: 19px;
    height: 19px;
}

.cmd:disabled {
    color: #8a8a8a;
}

.caret {
    margin: 8px 0 0 auto;
    border: 4px solid transparent;
    border-top-color: #666;
    border-bottom: none;
}

.big {
    display: flex;
    flex-direction: column;
    align-items: center;
    padding-top: 12px;
}

.big svg {
    width: 38px;
    height: 38px;
}

.big-label {
    display: flex;
    align-items: center;
    margin: 3px 0 0 8px;
    line-height: 20px;
}

.big-label.spaced {
    gap: 8px;
    margin-left: 16px;
}

/* outline tree */
.workspace {
    display: grid;
    grid-template-columns: 261px 370px minmax(0, 1fr);
    column-gap: 3px;
    flex: 1;
    min-height: 0;
}

.outline {
    display: flex;
    flex-direction: column;
    min-height: 0;
    background: #ecedef;
}

.outline-title {
    padding-left: 4px;
    line-height: 26px;
    color: #64748b;
}

.filter {
    height: 31px;
    margin: 11px 7px 7px 2px;
    padding: 0 16px;
    border: none;
    border-radius: 16px;
    background: #fafafa;
    font-size: 13px;
}

.filter::placeholder {
    color: #808080;
}

.tree-wrap {
    display: flex;
    flex: 1;
    min-height: 0;
    padding-right: 5px;
}

.tree {
    flex: 1;
    min-width: 0;
    overflow: hidden;
    padding-top: 1px;
    font-family: "Open Sans", sans-serif;
    list-style: none;
    white-space: nowrap;
}

.tree li {
    display: flex;
    align-items: center;
    height: 19px;
}

.tree li.section {
    height: 16px;
    padding-left: 3px;
    gap: 6px;
    font-weight: bold;
}

.tree svg {
    width: 16px;
    height: 16px;
    flex: none;
    margin-right: 6px;
}

.tree svg.small {
    width: 14px;
    height: 14px;
    margin-right: 4px;
}

.tree .level1 {
    padding-left: 43px;
}

.tree .level1 .expander {
    margin: 0 6px 0 -20px;
}

.tree .level2 {
    margin-left: 60px;
    padding-left: 3px;
}

.tree .selected {
    border: 1px solid #a3b4c4;
    border-left: none;
    background: linear-gradient(#aebccb, #bfcbd8);
}

.expander {
    display: flex;
    align-items: center;
    justify-content: center;
    width: 14px;
    height: 14px;
    flex: none;
    border: 1px solid #9aa8b5;
    border-radius: 50%;
    background:
        linear-gradient(#445, #445) center / 6px 2px no-repeat,
        linear-gradient(#445, #445) center / 2px 6px no-repeat;
}

.expander.minus {
    background: linear-gradient(#445, #445) center / 6px 2px no-repeat;
}

.scrollbar {
    display: flex;
    flex-direction: column;
    width: 12px;
    background: #c2c8d0;
}

.scroll-end {
    display: flex;
    align-items: center;
    justify-content: center;
    height: 20px;
    background: #9dadb5;
}

.scroll-end:last-child {
    height: 6px;
}

.scroll-thumb {
    flex: 7;
    background: #5d6172;
}

.scroll-track {
    flex: 3;
}

/* task page */
.panel-head {
    display: flex;
    align-items: center;
    justify-content: space-between;
    height: 26px;
    flex: none;
    padding: 0 1px 0 8px;
    background: #bfc3cb;
    color: #5d6b80;
}

.close svg {
    display: block;
    width: 11px;
    height: 11px;
}

.task {
    border: solid #bbb;
    border-width: 0 1px;
    background: #f4f4f4;
}

.task-body {
    padding: 15px 9px 0 10px;
}

.task-title {
    display: flex;
    align-items: center;
    justify-content: space-between;
    height: 27px;
    padding-right: 8px;
    margin-bottom: 12px;
}

.help {
    width: 28px;
    height: 26px;
    border: 1px solid #4f6072;
    border-radius: 4px;
    background: #fff;
}

.help svg {
    display: block;
    width: 20px;
    height: 20px;
    margin: auto;
}

h4 {
    line-height: 20px;
    color: #34404f;
}

.box {
    border: 1px solid #d6d6d6;
    border-radius: 2px;
    background: #f0f0f0;
}

.mesh-buttons {
    display: flex;
    flex-wrap: wrap;
    gap: 4px;
    padding: 5px 60px 10px 9px;
}

.push {
    width: 89px;
    height: 27px;
    border: 1px solid #4f6072;
    border-radius: 4px;
    background: #f4f4f4;
    white-space: nowrap;
}

.solver-title {
    margin-top: 6px;
}

.solver {
    display: grid;
    grid-template-columns: 131px 173px;
    column-gap: 21px;
    row-gap: 24px;
    padding: 5px 6px 26px;
}

.options {
    display: flex;
    flex-direction: column;
    min-height: 55px;
    padding: 3px 9px;
    background: #ededed;
}

.options label {
    display: flex;
    align-items: center;
    gap: 6px;
    height: 21px;
}

.options.tall {
    min-height: 79px;
}

.options.bare {
    padding: 0 21px;
    background: none;
}

.options.bare label:first-child {
    height: 15px;
    margin-bottom: 3px;
}

input[type="radio"],
input[type="checkbox"] {
    appearance: none;
    width: 14px;
    height: 14px;
    flex: none;
    margin: 0;
    border: 1px solid #aaa;
    background: #fff;
}

input[type="radio"] {
    border-radius: 50%;
}

input[type="radio"]:checked {
    background: radial-gradient(circle, #444 3px, #fff 4px);
}

.gravity {
    display: flex;
    align-items: center;
    gap: 6px;
    margin: 8px 0 0 1px;
}

/* graphics window */
.right {
    display: flex;
    flex-direction: column;
    min-height: 0;
}

.graphics {
    position: relative;
    display: flex;
    flex-direction: column;
    justify-content: space-between;
    flex: 1;
    overflow: hidden;
    background: linear-gradient(#cad2e3, #fff 88%);
}

.view-head {
    display: flex;
    align-items: center;
    gap: 361px;
    height: 26px;
    padding-left: 5px;
    color: #26313e;
}

.view-head svg {
    width: 16px;
    height: 16px;
}

/* the meshed pipe, drawn on the free canvas */
.pipe {
    position: absolute;
    top: 234px;
    left: 198px;
    width: 402px;
    height: 7px;
    border: solid #b9bcbf;
    border-width: 2px 0 1px;
    background: linear-gradient(90deg, #45c 1px, #0f0 1px, #0f0 401px, #f00 401px);
}

.view-tools {
    display: flex;
    align-items: center;
    gap: 5px;
    height: 32px;
    margin-bottom: 10px;
}

.view-tools .grip {
    flex: none;
}

.view-tools .grip:first-child {
    width: 10px;
    padding-left: 5px;
}

.vt {
    width: 29px;
    height: 29px;
    flex: none;
    border: 1px solid #92a0ad;
    border-radius: 4px;
    background: #fff;
}

.vt.off {
    border-color: #c4c8cd;
    background: #e2e3e6;
}

.vt.on {
    width: 33px;
    height: 33px;
    border: 3px solid #92a0ad;
    border-radius: 3px;
}

.vt svg {
    display: block;
    width: 20px;
    height: 20px;
    margin: auto;
}

.vt svg.zoom {
    width: 24px;
}

/* console */
.console {
    height: 116px;
    flex: none;
    overflow: hidden;
    padding-left: 4px;
    background: #f7f7f7;
}

.console pre {
    margin-top: -9px;
    font-family: "Liberation Mono", monospace;
    font-size: 13px;
    line-height: 16px;
}
```
